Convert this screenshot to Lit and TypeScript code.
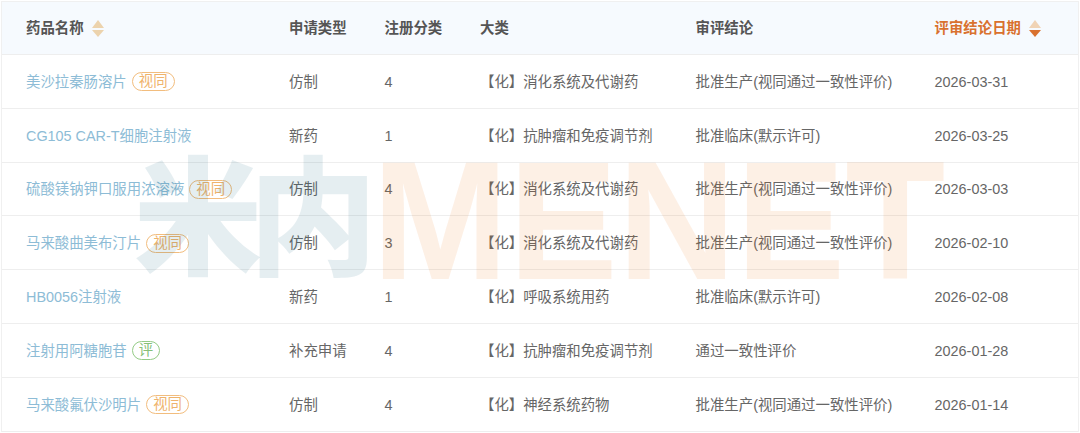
import { LitElement, html, css } from "lit";
import { customElement } from "lit/decorators.js";

type Row = { name: string; tag?: string; type: string; cat: string; big: string; res: string; date: string };
const rows: Row[] = [
  { name: "美沙拉秦肠溶片", tag: "视同", type: "仿制", cat: "4", big: "【化】消化系统及代谢药", res: "批准生产(视同通过一致性评价)", date: "2026-03-31" },
  { name: "CG105 CAR-T细胞注射液", type: "新药", cat: "1", big: "【化】抗肿瘤和免疫调节剂", res: "批准临床(默示许可)", date: "2026-03-25" },
  { name: "硫酸镁钠钾口服用浓溶液", tag: "视同", type: "仿制", cat: "4", big: "【化】消化系统及代谢药", res: "批准生产(视同通过一致性评价)", date: "2026-03-03" },
  { name: "马来酸曲美布汀片", tag: "视同", type: "仿制", cat: "3", big: "【化】消化系统及代谢药", res: "批准生产(视同通过一致性评价)", date: "2026-02-10" },
  { name: "HB0056注射液", type: "新药", cat: "1", big: "【化】呼吸系统用药", res: "批准临床(默示许可)", date: "2026-02-08" },
  { name: "注射用阿糖胞苷", tag: "评", type: "补充申请", cat: "4", big: "【化】抗肿瘤和免疫调节剂", res: "通过一致性评价", date: "2026-01-28" },
  { name: "马来酸氟伏沙明片", tag: "视同", type: "仿制", cat: "4", big: "【化】神经系统药物", res: "批准生产(视同通过一致性评价)", date: "2026-01-14" },
];

@customElement("app-root")
export class AppRoot extends LitElement {
  static styles = css`
    :host { display: block; width: 1080px; height: 433px; overflow: hidden; background: #fff;
      font-family: "Liberation Sans", "Noto Sans CJK SC", sans-serif; font-size: 14.4px; line-height: 20px; color: #666; }
    .table { position: relative; margin: 1px 0 0 1px; width: 1078px; box-sizing: border-box; border-top: 1px solid #f0f0f0; border-left: 1px solid #f0f0f0; border-right: 1px solid #f0f0f0; }
    .row { display: grid; grid-template-columns: 263px 95.6px 95.4px 215.6px 239px 1fr; height: 53.8px; box-sizing: border-box; border-bottom: 1px solid #eee; align-items: center; padding: 1px 0 0 24px; }
    .row.head { background: #f6fafe; height: 53px; padding: 0 0 0 24px; font-weight: 700; color: #555; }
    .th { display: flex; align-items: center; gap: 8px; }
    .th.active { color: #d9712f; }
    .name { color: #8dbcd6; display: flex; align-items: center; gap: 5px; }
    .tag { border: 1px solid #f2bd7e; color: #efb36c; border-radius: 10px; height: 17px; line-height: 17px; padding: 0 6px; }
    .tag.green { border-color: #93cb85; color: #86bf77; }
    .sort { display: flex; flex-direction: column; gap: 2px; }
    .up { width: 0; height: 0; border-left: 6px solid transparent; border-right: 6px solid transparent; border-bottom: 8px solid #ecd3ad; }
    .down { width: 0; height: 0; border-left: 6px solid transparent; border-right: 6px solid transparent; border-top: 7px solid #ecd3ad; }
    .active .up { border-bottom-color: #f0d3b5; }
    .active .down { border-top-color: #d9712f; }
    .mark { position: absolute; left: 0; top: 0; width: 100%; height: 100%; pointer-events: none; overflow: hidden; }
    .cn { position: absolute; left: 132px; top: 133px; font-size: 128px; line-height: 150px; font-weight: 900; letter-spacing: -13px; color: rgba(0, 85, 120, 0.1); white-space: nowrap; font-family: "Noto Sans CJK SC", sans-serif; }
    .en { position: absolute; left: 370px; top: 154px; font-size: 168px; line-height: 130px; font-weight: 700; color: rgba(240, 110, 0, 0.1); white-space: nowrap; transform-origin: left top; transform: scaleX(0.975); }
  `;
  private sort() { return html`<span class="sort"><span class="up"></span><span class="down"></span></span>`; }
  render() {
    return html`<div class="table">
      <div class="row head">
        <div class="th">药品名称${this.sort()}</div><div>申请类型</div><div>注册分类</div><div>大类</div><div>审评结论</div>
        <div class="th active">评审结论日期${this.sort()}</div>
      </div>
      ${rows.map((r) => html`<div class="row">
        <div class="name">${r.name}${r.tag ? html`<span class="tag ${r.tag === "评" ? "green" : ""}">${r.tag}</span>` : ""}</div>
        <div>${r.type}</div><div>${r.cat}</div><div>${r.big}</div><div>${r.res}</div><div>${r.date}</div>
      </div>`)}
      <div class="mark"><span class="cn">米内</span><span class="en">MENET</span></div>
    </div>`;
  }
}
